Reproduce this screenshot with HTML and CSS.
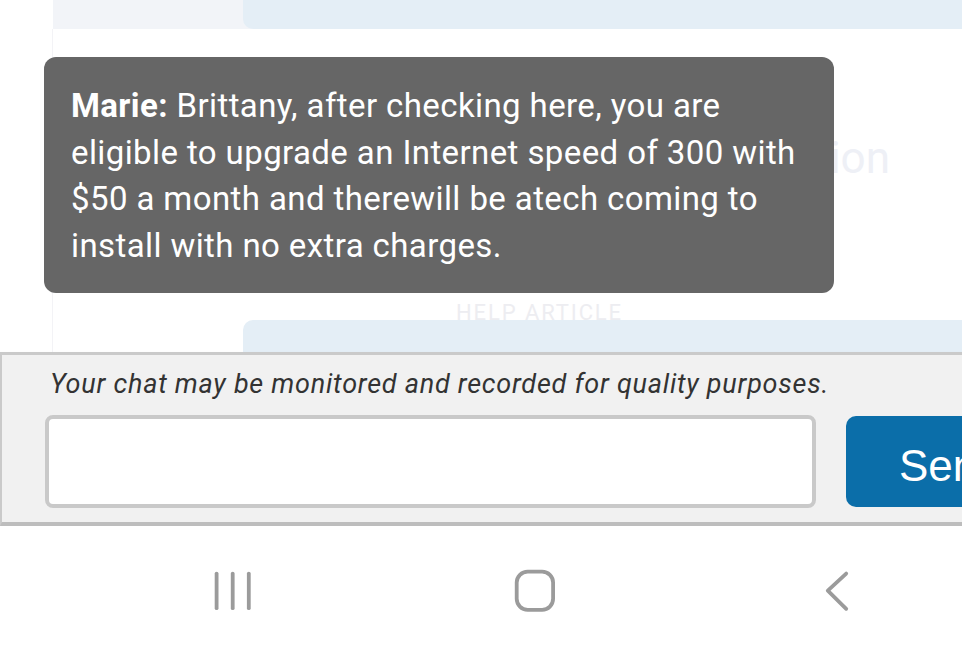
FILE: index.html
```html
<!DOCTYPE html>
<html lang="en">
<head>
<meta charset="utf-8">
<title>Chat</title>
<link rel="stylesheet" href="styles.css">
</head>
<body>
<div class="screen">
  <div class="top-strip">
    <div class="top-bubble"></div>
  </div>
  <main class="main">
    <div class="heading-row"><h2 class="heading">Upgrade Information</h2></div>
    <div class="help-label">HELP ARTICLE</div>
    <div class="help-card"></div>
  </main>
  <footer class="chat-footer">
    <p class="notice">Your chat may be monitored and recorded for quality purposes.</p>
    <div class="compose">
      <input class="compose-input" type="text" aria-label="Message">
      <button class="send-btn" type="button">Send</button>
    </div>
  </footer>
  <nav class="nav-bar">
    <span class="nav-icon">
      <svg width="44" height="44" viewBox="0 0 44 44" fill="none" stroke="#9b9b9b" stroke-width="3.8" stroke-linecap="round">
        <line x1="5.6" y1="4.6" x2="5.6" y2="39.2"/>
        <line x1="21.7" y1="4.6" x2="21.7" y2="39.2"/>
        <line x1="37.8" y1="4.6" x2="37.8" y2="39.2"/>
      </svg>
    </span>
    <span class="nav-icon">
      <svg width="44" height="44" viewBox="0 0 44 44" fill="none" stroke="#9b9b9b" stroke-width="3.8">
        <rect x="3.7" y="2.6" width="36.4" height="38.2" rx="11"/>
      </svg>
    </span>
    <span class="nav-icon">
      <svg width="44" height="44" viewBox="0 0 44 44" fill="none" stroke="#9b9b9b" stroke-width="3.8" stroke-linecap="round" stroke-linejoin="round">
        <polyline points="31.2,4.6 12.8,21.7 31.2,39.8"/>
      </svg>
    </span>
  </nav>
  <div class="popup">
    <b>Marie:</b> Brittany, after checking here, you are eligible to upgrade an Internet speed of 300 with $50 a month and therewill be atech coming to install with no extra charges.
  </div>
</div>
</body>
</html>
```
FILE: styles.css
```css
* { box-sizing: border-box; }
html, body {
  margin: 0;
  padding: 0;
  background: #ffffff;
}
body {
  width: 962px;
  height: 652px;
  overflow: hidden;
  font-family: Roboto, "Noto Sans", sans-serif;
}
.screen {
  position: relative;
  width: 962px;
  height: 652px;
  overflow: hidden;
  display: flex;
  flex-direction: column;
}
.top-strip {
  height: 29px;
  margin-left: 53px;
  background: #f2f4f8;
  display: flex;
  flex: 0 0 auto;
}
.top-bubble {
  margin-left: 190px;
  flex: 1;
  background: #e4eef6;
  border-bottom-left-radius: 10px;
}
.main {
  height: 323px;
  flex: 0 0 auto;
  margin-left: 52px;
  border-left: 1px solid #f3f3f6;
  display: flex;
  flex-direction: column;
}
.heading-row {
  margin-top: 103px;
  height: 52px;
  display: flex;
  justify-content: flex-end;
  padding-right: 72px;
}
.heading {
  margin: 0;
  font-size: 44px;
  line-height: 52px;
  font-weight: 400;
  color: #eef0f6;
  white-space: nowrap;
}
.help-label {
  margin-top: 118px;
  height: 18px;
  overflow: hidden;
  font-size: 22px;
  line-height: 22px;
  letter-spacing: 1.9px;
  color: #ededf1;
  padding-left: 403px;
  white-space: nowrap;
}
.help-card {
  flex: 1;
  margin-left: 190px;
  background: #e4eef6;
  border-top-left-radius: 10px;
}
.chat-footer {
  flex: 0 0 auto;
  background: #f1f1f1;
  border-top: 3px solid #cacaca;
  border-left: 2px solid #cacaca;
  border-bottom: 4px solid #bdbdbd;
  box-shadow: 0 2px 3px rgba(0, 0, 0, 0.12);
  padding: 13px 0 14px 43px;
}
.notice {
  margin: 0 0 15px 5px;
  font-size: 27px;
  line-height: 32px;
  letter-spacing: 0.75px;
  font-style: italic;
  color: #333333;
  white-space: nowrap;
}
.compose {
  display: flex;
  align-items: center;
  gap: 30px;
  height: 93px;
}
.compose-input {
  flex: 0 0 771px;
  height: 93px;
  border: 4px solid #c9c9c9;
  border-radius: 8px;
  background: #ffffff;
  margin: 0;
  outline: none;
}
.send-btn {
  flex: 0 0 auto;
  width: 170px;
  height: 91px;
  margin: 0;
  border: none;
  border-radius: 10px;
  background: #0b6ea9;
  color: #ffffff;
  font-family: "Liberation Sans", Arial, sans-serif;
  font-size: 44px;
  line-height: 44px;
  text-align: left;
  padding: 9px 0 0 53px;
}
.nav-bar {
  flex: 1;
  background: #ffffff;
  display: flex;
  gap: 258px;
  padding: 43px 0 0 211px;
}
.nav-icon {
  display: block;
  width: 44px;
  height: 44px;
}
.nav-icon svg { display: block; }
.popup {
  position: absolute;
  left: 44px;
  top: 57px;
  width: 790px;
  background: #666666;
  border-radius: 12px;
  padding: 26px 18px 24px 27px;
  color: #ffffff;
  font-size: 33px;
  line-height: 46.5px;
  letter-spacing: 0.4px;
}
.popup b { font-weight: 700; }
```
